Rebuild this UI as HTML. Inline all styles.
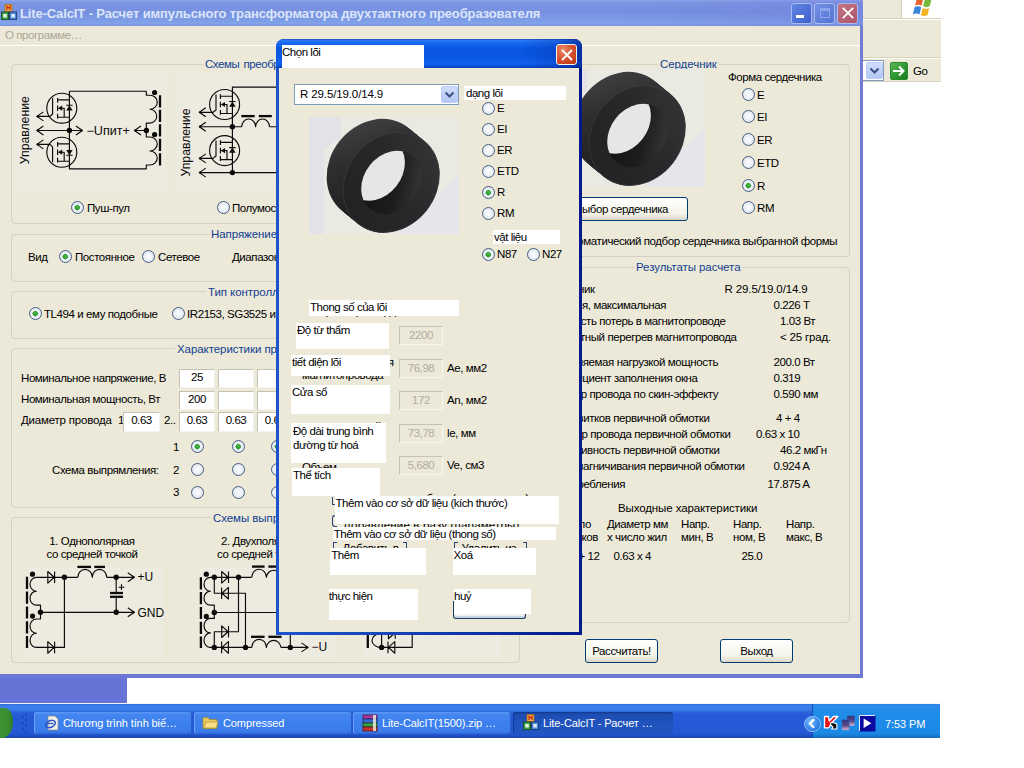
<!DOCTYPE html>
<html lang="ru"><head><meta charset="utf-8"><title>Lite-CalcIT</title>
<style>
html,body{margin:0;padding:0;}
body{width:1024px;height:768px;position:relative;overflow:hidden;background:#fff;font-family:"Liberation Sans",sans-serif;font-size:11.5px;color:#000;line-height:13px;letter-spacing:-0.42px;}
div,span{position:absolute;white-space:nowrap;box-sizing:border-box;}
svg{position:absolute;overflow:visible;}
.t{height:13px;line-height:13px;}
.beige{background:#ece9d8;}
.grp{border:1px solid #d4d1c0;border-radius:4px;}
.cap{color:#123e92;letter-spacing:-0.07px;background:#ece9d8;padding:0 2px;}
.rad{width:13px;height:13px;border-radius:50%;border:1.25px solid #465c7e;background:radial-gradient(circle at 50% 50%,#fafbfd 0,#eef2f8 45%,#d4deec 100%);}
.rad.on::after{content:"";position:absolute;left:3px;top:3px;width:4.6px;height:4.6px;border-radius:40%;transform:rotate(45deg);background:radial-gradient(circle at 45% 40%,#4fc04f 0,#2a9c2a 55%,#1c7c1c 100%);}
.inp{background:#fff;border:1px solid #c4c2b4;border-right-color:#f4f3ee;border-bottom-color:#f4f3ee;text-align:center;line-height:15px;}
.btn{border:1px solid #003c74;border-radius:3px;background:linear-gradient(#fff 0,#f5f4ea 70%,#dcd8c8 100%);text-align:center;}
.wl{background:#fff;}
.tb{top:711.5px;width:158px;height:22.5px;border-radius:3px;background:linear-gradient(#5c98f6 0,#4486f0 12%,#3c80ee 50%,#3a7cea 88%,#2e68d6 100%);box-shadow:inset 1px 0 0 #6aa0f8, inset -1px 0 0 #2a5cc8;}
.tb.act{width:160px;background:linear-gradient(#1a44a4 0,#1e4eb4 15%,#2054be 60%,#2054be 100%);box-shadow:inset 1px 1px 1px #123a94;}
.tbt{color:#fff;font-size:11px;letter-spacing:-0.1px;}
.cb{top:3px;width:21px;height:21px;border-radius:3px;border:1px solid #a8bcf0;}
.vl{padding-top:1px;line-height:13px;letter-spacing:-0.47px;white-space:nowrap;overflow:hidden;}
.din{width:44px;height:19px;border:1px solid #c5c2b0;border-right-color:#f6f5f0;border-bottom-color:#f6f5f0;text-align:center;line-height:16px;color:#b0ad9c;background:#ece9d8;}
.btn.dflt{border-color:#1c3c5c;box-shadow:inset 0 -2px 1px #c4d4e6, inset 1px 0 0 #d4e0ee, inset -1px 0 0 #d4e0ee;background:#f6f6f2;}
.brk{height:10px;border-left:1px solid #2a4478;border-right:1px solid #2a4478;}
.brk::before,.brk::after{content:"";position:absolute;top:0;width:3px;height:1px;background:#2a4478;}
.brk::before{left:0;}.brk::after{right:0;}

</style></head>
<body>
<!-- background: remnants of a browser window -->
<div class="beige" style="left:863px;top:0;width:78px;height:82px;"></div>
<div style="left:901px;top:0;width:40px;height:18px;background:#fff;border-left:1px solid #d8d2bd;"></div>
<div style="left:863px;top:18px;width:78px;height:1px;background:#d8d2bd;"></div>
<div style="left:863px;top:19px;width:78px;height:1px;background:#fff;"></div>
<div style="left:863px;top:57px;width:78px;height:1px;background:#d8d2bd;"></div>
<div style="left:863px;top:58px;width:78px;height:1px;background:#fbfaf6;"></div>
<div style="left:863px;top:81px;width:78px;height:1px;background:#d8d2bd;"></div>
<!-- windows flag -->
<svg style="left:911.5px;top:-3.5px" width="24" height="20.7" viewBox="0 0 22 19">
 <path d="M4.6 1 Q7.6 -0.4 10.4 1.2 L8.8 8 Q6 6.4 2.8 7.8 Z" fill="#e6622c"/>
 <path d="M11.8 1.8 Q14.8 3.4 18 1.8 L16.2 8.6 Q13 10 10.2 8.6 Z" fill="#78b83c"/>
 <path d="M2.4 9.2 Q5.6 7.8 8.4 9.4 L6.8 16 Q4 14.4 0.8 15.8 Z" fill="#3a84d8"/>
 <path d="M9.8 10 Q12.8 11.6 15.8 10 L14.2 16.8 Q11 18.2 8.2 16.8 Z" fill="#f0b428"/>
</svg>
<!-- address bar dropdown + Go -->
<div style="left:863px;top:60px;width:21px;height:21px;background:#fff;border-top:1px solid #7f9db9;border-bottom:1px solid #7f9db9;border-right:1px solid #7f9db9;"></div>
<div style="left:866px;top:62px;width:17px;height:17px;background:linear-gradient(#cfdcfb,#b5c8f5);border:1px solid #b9cdf8;border-radius:2px;"></div>
<svg style="left:869px;top:67px" width="11" height="8" viewBox="0 0 11 8"><path d="M1.5 1.5 L5.5 5.5 L9.5 1.5" fill="none" stroke="#3c4f84" stroke-width="2"/></svg>
<div style="left:890px;top:62px;width:18px;height:18px;border-radius:2px;background:linear-gradient(135deg,#5cb85a 0,#2f9a32 50%,#1d7a22 100%);border:1px solid #2a8a2e;"></div>
<svg style="left:892px;top:65px" width="14" height="12" viewBox="0 0 14 12"><path d="M1 6 H11 M7 1.5 L11.5 6 L7 10.5" fill="none" stroke="#fff" stroke-width="2"/></svg>
<div class="t" style="left:913px;top:65px;">Go</div>

<!-- strip below main window -->
<div style="left:0;top:678px;width:127px;height:25px;background:#6674d8;"></div>
<div style="left:0;top:702.5px;width:940px;height:2px;background:#f4f6fc;"></div>

<!-- taskbar -->
<div style="left:0;top:704.3px;width:940px;height:33.5px;background:linear-gradient(#2f6cda 0,#3c82ea 6%,#3a7ee8 17%,#2c66dc 23%,#255ad8 30%,#2458d5 85%,#214fc6 93%,#1b42aa 100%);"></div>
<div style="left:0;top:708px;width:12.5px;height:30px;border-radius:0 9px 11px 0/0 12px 16px 0;background:linear-gradient(90deg,#3f9436 0,#3a8e30 60%,#2c7a22 100%);"></div>
<!-- grip -->
<svg style="left:22px;top:711px" width="8" height="24" viewBox="0 0 8 24">
 <g fill="#1a48b8"><rect x="3" y="2" width="2" height="2"/><rect x="0" y="5" width="2" height="2"/><rect x="3" y="8" width="2" height="2"/><rect x="0" y="11" width="2" height="2"/><rect x="3" y="14" width="2" height="2"/><rect x="0" y="17" width="2" height="2"/><rect x="3" y="20" width="2" height="2"/></g>
</svg>
<!-- task buttons -->
<div class="tb" style="left:34px;"></div>
<div class="tb" style="left:194px;"></div>
<div class="tb" style="left:353px;"></div>
<div class="tb act" style="left:513px;"></div>
<div class="t tbt" style="left:63px;top:717px;">Chương trình tính biế…</div>
<div class="t tbt" style="left:223px;top:717px;">Compressed</div>
<div class="t tbt" style="left:382px;top:717px;">Lite-CalcIT(1500).zip …</div>
<div class="t tbt" style="left:543px;top:717px;">Lite-CalcIT - Расчет …</div>
<!-- task icons -->
<svg style="left:44px;top:715px" width="16" height="16" viewBox="0 0 16 16">
 <path d="M4 1 H11 L14 4 V15 H4 Z" fill="#f4f2ea" stroke="#8a8a92" stroke-width="0.8"/>
 <ellipse cx="6.5" cy="9" rx="5" ry="3.2" fill="none" stroke="#2a56c8" stroke-width="1.6" transform="rotate(-25 6.5 9)"/>
 <path d="M3.5 8.5 H9.5" stroke="#2a56c8" stroke-width="1.4"/>
</svg>
<svg style="left:202px;top:715px" width="17" height="16" viewBox="0 0 17 16">
 <path d="M1 3.5 Q1 2.5 2 2.5 H6 L7.5 4.5 H14 Q15 4.5 15 5.5 V12.5 Q15 13.5 14 13.5 H2 Q1 13.5 1 12.5 Z" fill="#e8c860" stroke="#a88a28" stroke-width="0.8"/>
 <path d="M2 13 L4 7 H16 L14 13 Z" fill="#f8e088" stroke="#b89a30" stroke-width="0.8"/>
</svg>
<svg style="left:362px;top:714px" width="17" height="18" viewBox="0 0 17 18">
 <rect x="1" y="1" width="14" height="4" fill="#a83a9a" stroke="#4a1a48" stroke-width="0.8"/>
 <rect x="1" y="5" width="14" height="4" fill="#3a6ad0" stroke="#1a2a68" stroke-width="0.8"/>
 <rect x="1" y="9" width="14" height="4" fill="#38a048" stroke="#18481e" stroke-width="0.8"/>
 <rect x="1" y="13" width="14" height="4" fill="#c83030" stroke="#581414" stroke-width="0.8"/>
 <rect x="11" y="1" width="3" height="16" fill="#f0e8d8" opacity="0.85"/>
</svg>
<svg style="left:523px;top:714px" width="16" height="16" viewBox="0 0 16 16">
 <rect x="4" y="0.5" width="7" height="7" fill="#f0a848" stroke="#b06a18" stroke-width="0.8"/>
 <path d="M6 6 V2.2 L7.5 4 L9 2.2 V6" fill="none" stroke="#c02818" stroke-width="1.1"/>
 <rect x="0.5" y="8" width="7" height="7.5" fill="#3aa048" stroke="#1a4a28" stroke-width="0.9"/>
 <rect x="8.5" y="8" width="7" height="7.5" fill="#4a8ad8" stroke="#1a3a78" stroke-width="0.9"/>
 <rect x="2.3" y="10" width="3.5" height="3.5" fill="#e8f4e0"/><rect x="10.3" y="10" width="3.5" height="3.5" fill="#e0ecf8"/>
</svg>
<!-- tray -->
<div style="left:812px;top:704.3px;width:128px;height:33.5px;background:linear-gradient(#2a80e0 0,#2e8cec 6%,#2a8aea 13%,#1e8ce8 20%,#1b8ae6 85%,#1a7cd4 93%,#1666b8 100%);border-left:1px solid #1450b0;"></div>
<div style="left:804px;top:715.5px;width:16.5px;height:16.5px;border-radius:50%;background:radial-gradient(circle at 38% 32%,#7cc0ff 0,#3a8cec 50%,#1c60cc 100%);border:1px solid #8cbcf4;"></div>
<svg style="left:807px;top:718px" width="10" height="11" viewBox="0 0 10 11"><path d="M7 1.2 L3 5.5 L7 9.8" fill="none" stroke="#fff" stroke-width="2.3"/></svg>
<svg style="left:822.5px;top:714.5px" width="16" height="16" viewBox="0 0 16 16">
 <path d="M1.5 1.5 H5.5 L6.2 6 L10.5 1.5 H14.8 L8.6 8 L6 12.8 H1.5 Z" fill="#e81414" stroke="#fff" stroke-width="1.3" stroke-linejoin="round"/>
 <path d="M8.2 7.2 L13.8 8.8 L13.8 14 L8.6 14 L10 12.2 L7.4 9.4 Z" fill="#0c0c0c" stroke="#fff" stroke-width="1.1" stroke-linejoin="round"/>
</svg>
<svg style="left:840.5px;top:714.5px" width="15" height="17" viewBox="0 0 15 17">
 <defs><linearGradient id="nw" x1="0" y1="0" x2="0" y2="1"><stop offset="0" stop-color="#34347a"/><stop offset="0.55" stop-color="#5a4a8a"/><stop offset="1" stop-color="#e8b8cc"/></linearGradient></defs>
 <rect x="6" y="0.8" width="7.6" height="10" rx="1" fill="url(#nw)"/>
 <rect x="0.8" y="4.6" width="7.6" height="10.6" rx="1" fill="url(#nw)" stroke="#2a80e0" stroke-width="0.5"/>
</svg>
<svg style="left:858.5px;top:714.5px" width="17" height="17" viewBox="0 0 17 17">
 <rect x="0" y="0" width="16.5" height="16.5" fill="#0a0aa0"/>
 <path d="M0.5 16 V0.5 H16" fill="none" stroke="#e8ecff" stroke-width="1"/>
 <path d="M4.6 3.6 L12.4 8.3 L4.6 13 Z" fill="#fff"/>
</svg>
<div class="t tbt" style="left:885px;top:717.5px;">7:53 PM</div>
<!-- main window -->
<div id="mw" class="beige" style="left:0;top:0;width:863px;height:678px;border-right:3px solid #727ad2;border-bottom:4px solid #6c78d6;"></div>
<div style="left:0;top:0;width:863px;height:26px;background:linear-gradient(90deg,rgba(110,110,215,0) 0,rgba(110,110,215,0) 70%,rgba(106,104,212,0.25) 100%),linear-gradient(#8ea8ea 0,#7c96e3 10%,#7790e0 45%,#7c9ae5 72%,#82a4e8 92%,#7690dc 100%);"></div>
<!-- app icon -->
<svg style="left:1px;top:4px" width="16" height="16" viewBox="0 0 16 16">
 <rect x="4" y="0.5" width="7" height="7" fill="#f0a848" stroke="#b06a18" stroke-width="0.8"/>
 <path d="M6 6 V2.2 L7.5 4 L9 2.2 V6" fill="none" stroke="#c02818" stroke-width="1.1"/>
 <rect x="0.5" y="8" width="7" height="7.5" fill="#3aa048" stroke="#1a4a28" stroke-width="0.9"/>
 <rect x="8.5" y="8" width="7" height="7.5" fill="#4a8ad8" stroke="#1a3a78" stroke-width="0.9"/>
 <rect x="2.3" y="10" width="3.5" height="3.5" fill="#e8f4e0"/><rect x="10.3" y="10" width="3.5" height="3.5" fill="#e0ecf8"/>
</svg>
<div id="ttl" style="left:20px;top:6px;height:16px;line-height:16px;font-weight:bold;font-size:13px;color:#dbe6fa;letter-spacing:-0.12px;">Lite-CalcIT - Расчет импульсного трансформатора двухтактного преобразователя</div>
<!-- caption buttons -->
<div class="cb" style="left:791px;background:linear-gradient(135deg,#6486e4,#3c5ecc);"></div>
<div style="left:796px;top:15px;width:7.5px;height:3px;background:#fff;"></div>
<div class="cb" style="left:814px;background:linear-gradient(135deg,#7290e4,#5674d2);"></div>
<div style="left:820px;top:8px;width:10px;height:10px;border:1px solid #8ea4e8;border-top-width:3px;"></div>
<div class="cb" style="left:837px;background:linear-gradient(135deg,#c47484,#ac5468);"></div>
<svg style="left:842px;top:7px" width="12" height="12" viewBox="0 0 12 12"><path d="M0.8 0.8 L11.2 11.2 M11.2 0.8 L0.8 11.2" stroke="#fff" stroke-width="1.8"/></svg>
<!-- menu -->
<div class="t" style="left:5px;top:29px;color:#aaa796;">О программе…</div>
<div style="left:0;top:45px;width:860px;height:1px;background:#fff;"></div>

<!-- group 1 -->
<div class="grp" style="left:10.5px;top:64px;width:509.5px;height:160px;"></div>
<div class="t cap" style="left:203px;top:58px;word-spacing:-0.6px;letter-spacing:-0.45px;">Схемы&nbsp; преобразователя</div>
<div style="left:16px;top:72px;width:150px;height:118px;background:#edebe0;"></div>
<div style="left:176px;top:72px;width:150px;height:118px;background:#edebe0;"></div>
<div class="rad on" style="left:71px;top:201px;"></div><div class="t" style="left:87px;top:202px;">Пуш-пул</div>
<div class="rad" style="left:217px;top:201px;"></div><div class="t" style="left:232px;top:202px;">Полумост</div>

<!-- group 2 -->
<div class="grp" style="left:10.5px;top:234px;width:509.5px;height:48px;"></div>
<div class="t cap" style="left:209px;top:228px;">Напряжение питания</div>
<div class="t" style="left:28px;top:251px;">Вид</div>
<div class="rad on" style="left:59px;top:250px;"></div><div class="t" style="left:75px;top:251px;">Постоянное</div>
<div class="rad" style="left:142px;top:250px;"></div><div class="t" style="left:158px;top:251px;">Сетевое</div>
<div class="t" style="left:232px;top:251px;">Диапазон</div>

<!-- group 3 -->
<div class="grp" style="left:10.5px;top:291px;width:509.5px;height:48px;"></div>
<div class="t cap" style="left:206px;top:286px;">Тип контроллера</div>
<div class="rad on" style="left:29px;top:307px;"></div><div class="t" style="left:44px;top:308px;">TL494 и ему подобные</div>
<div class="rad" style="left:172px;top:307px;"></div><div class="t" style="left:187px;top:308px;">IR2153, SG3525 и им подобные</div>

<!-- group 4 -->
<div class="grp" style="left:10.5px;top:348px;width:509.5px;height:160px;"></div>
<div class="t cap" style="left:175px;top:343px;">Характеристики преобразователя</div>
<div class="t" style="left:21px;top:372px;">Номинальное напряжение, В</div>
<div class="t" style="left:21px;top:393px;">Номинальная мощность, Вт</div>
<div class="t" style="left:21px;top:414px;letter-spacing:-0.2px;">Диаметр провода</div><div class="t" style="left:118px;top:414px;">1</div><div class="t" style="left:164px;top:414px;">2..</div>
<div class="inp" style="left:179px;top:369px;width:36px;height:19px;">25</div><div class="inp" style="left:218px;top:369px;width:36px;height:19px;"></div><div class="inp" style="left:257px;top:369px;width:36px;height:19px;"></div>
<div class="inp" style="left:179px;top:391px;width:36px;height:19px;">200</div><div class="inp" style="left:218px;top:391px;width:36px;height:19px;"></div><div class="inp" style="left:257px;top:391px;width:36px;height:19px;"></div>
<div class="inp" style="left:123px;top:412px;width:37px;height:20px;">0.63</div><div class="inp" style="left:179px;top:412px;width:36px;height:20px;">0.63</div><div class="inp" style="left:218px;top:412px;width:36px;height:20px;">0.63</div><div class="inp" style="left:257px;top:412px;width:36px;height:20px;">0.63</div>
<div class="t" style="left:173px;top:441px;">1</div><div class="t" style="left:173px;top:464px;">2</div><div class="t" style="left:173px;top:486px;">3</div>
<div class="t" style="left:52px;top:464px;">Схема выпрямления:</div>
<div class="rad on" style="left:191px;top:440px;"></div><div class="rad on" style="left:232px;top:440px;"></div><div class="rad on" style="left:271px;top:440px;"></div>
<div class="rad" style="left:191px;top:463px;"></div><div class="rad" style="left:232px;top:463px;"></div><div class="rad" style="left:271px;top:463px;"></div>
<div class="rad" style="left:191px;top:486px;"></div><div class="rad" style="left:232px;top:486px;"></div><div class="rad" style="left:271px;top:486px;"></div>

<!-- group 5 -->
<div class="grp" style="left:10.5px;top:517px;width:509.5px;height:146px;"></div>
<div class="t cap" style="left:211px;top:512px;">Схемы выпрямления</div>
<div class="t" style="left:42px;top:535px;width:100px;text-align:center;">1. Однополярная</div>
<div class="t" style="left:42px;top:548px;width:100px;text-align:center;">со средней точкой</div>
<div class="t" style="left:221px;top:535px;">2. Двухполярная</div>
<div class="t" style="left:217px;top:548px;">со средней точкой</div>
<div style="left:25px;top:566px;width:138px;height:91px;background:#edebe0;"></div>
<div style="left:199px;top:566px;width:138px;height:91px;background:#edebe0;"></div>
<div style="left:363px;top:566px;width:138px;height:91px;background:#edebe0;"></div>

<!-- right: core group -->
<div class="grp" style="left:529px;top:64px;width:321px;height:193px;"></div>
<div class="t cap" style="left:658px;top:58px;">Сердечник</div>
<div style="left:555px;top:69px;width:149px;height:118px;background:#e6e6e6;"></div>
<div class="t" style="left:728px;top:71px;">Форма сердечника</div>
<div class="rad" style="left:742px;top:88px;"></div><div class="t" style="left:757px;top:89px;">E</div>
<div class="rad" style="left:742px;top:110px;"></div><div class="t" style="left:757px;top:111px;">EI</div>
<div class="rad" style="left:742px;top:133px;"></div><div class="t" style="left:757px;top:134px;">ER</div>
<div class="rad" style="left:742px;top:156px;"></div><div class="t" style="left:757px;top:157px;">ETD</div>
<div class="rad on" style="left:742px;top:179px;"></div><div class="t" style="left:757px;top:180px;">R</div>
<div class="rad" style="left:742px;top:201px;"></div><div class="t" style="left:757px;top:202px;">RM</div>
<div class="btn" style="left:560px;top:197px;width:128px;height:24px;line-height:22px;text-align:right;padding-right:19px;">Выбор сердечника</div>
<div class="t" style="right:187px;top:235px;">Автоматический подбор сердечника выбранной формы</div>

<!-- right: results group -->
<div class="grp" style="left:529px;top:267px;width:321px;height:356px;"></div>
<div class="t cap" style="left:634px;top:261px;">Результаты расчета</div>
<div class="t" style="right:429.5px;top:283px;">Сердечник</div><div class="t" style="left:724.5px;top:283px;letter-spacing:-0.12px;">R 29.5/19.0/14.9</div>
<div class="t" style="right:358px;top:299px;">Индукция, максимальная</div><div class="t" style="left:773.5px;top:299px;">0.226 Т</div>
<div class="t" style="right:298.5px;top:315px;">Мощность потерь в магнитопроводе</div><div class="t" style="left:780px;top:315px;">1.03 Вт</div>
<div class="t" style="right:287.5px;top:331px;">Расчетный перегрев магнитопровода</div><div class="t" style="left:780px;top:331px;letter-spacing:-0.17px;">&lt; 25 град.</div>
<div class="t" style="right:306px;top:356px;">Потребляемая нагрузкой мощность</div><div class="t" style="left:773.5px;top:356px;">200.0 Вт</div>
<div class="t" style="right:326.5px;top:372px;">Коэффициент заполнения окна</div><div class="t" style="left:773.5px;top:372px;">0.319</div>
<div class="t" style="right:306px;top:388px;">Диаметр провода по скин-эффекту</div><div class="t" style="left:773.5px;top:388px;">0.590 мм</div>
<div class="t" style="right:314.5px;top:412px;">Число витков первичной обмотки</div><div class="t" style="left:776px;top:412px;">4 + 4</div>
<div class="t" style="right:293.5px;top:428px;">Диаметр провода первичной обмотки</div><div class="t" style="left:756px;top:428px;">0.63 x 10</div>
<div class="t" style="right:304.5px;top:444px;">Индуктивность первичной обмотки</div><div class="t" style="left:780px;top:444px;">46.2 мкГн</div>
<div class="t" style="right:279.5px;top:460px;">Ток намагничивания первичной обмотки</div><div class="t" style="left:773.5px;top:460px;">0.924 A</div>
<div class="t" style="right:399px;top:478px;">Ток потребления</div><div class="t" style="left:767.5px;top:478px;">17.875 A</div>
<div class="t" style="left:618px;top:502px;letter-spacing:-0.11px;">Выходные характеристики</div>
<div class="t" style="right:433px;top:518px;">Число</div>
<div class="t" style="right:426px;top:531px;">витков</div>
<div class="t" style="left:607px;top:518px;">Диаметр мм</div>
<div class="t" style="left:607px;top:531px;">x число жил</div>
<div class="t" style="left:681px;top:518px;">Напр.</div>
<div class="t" style="left:681px;top:531px;">мин, В</div>
<div class="t" style="left:733px;top:518px;">Напр.</div>
<div class="t" style="left:733px;top:531px;">ном, В</div>
<div class="t" style="left:786px;top:518px;">Напр.</div>
<div class="t" style="left:786px;top:531px;">макс, В</div>
<div class="t" style="right:424.5px;top:550px;">12 + 12</div>
<div class="t" style="left:613.5px;top:550px;">0.63 x 4</div>
<div class="t" style="left:741.5px;top:550px;">25.0</div>
<div class="btn" style="left:585px;top:639px;width:73px;height:24px;line-height:22px;">Рассчитать!</div>
<div class="btn" style="left:720px;top:639px;width:73px;height:24px;line-height:22px;">Выход</div>
<svg style="left:555px;top:69.5px" width="150" height="117" viewBox="0 0 150 117">
<defs>
<linearGradient id="r2s" x1="0.75" y1="0" x2="0.1" y2="0.9"><stop offset="0" stop-color="#414143"/><stop offset="0.35" stop-color="#2e2e30"/><stop offset="1" stop-color="#1b1b1d"/></linearGradient>
<linearGradient id="r2f" x1="0" y1="0.3" x2="1" y2="0.7"><stop offset="0" stop-color="#222224"/><stop offset="0.6" stop-color="#29292b"/><stop offset="1" stop-color="#343436"/></linearGradient>
<linearGradient id="r2i" x1="0.2" y1="0.1" x2="0.8" y2="1"><stop offset="0" stop-color="#141416"/><stop offset="0.55" stop-color="#1d1d1f"/><stop offset="1" stop-color="#38383a"/></linearGradient>
<clipPath id="r2c"><ellipse cx="82.3" cy="65.5" rx="34" ry="27.5" transform="rotate(-52 82.3 65.5)"/></clipPath>
</defs>
<rect width="150" height="117" fill="#eae9e2"/>
<path d="M0 0 H32 V20 L15 32 V117 H0 Z" fill="#e2e2e7"/>
<path d="M88 117 L150 58 V117 Z" fill="#e5e5ea"/>
<g fill="url(#r2s)"><ellipse cx="82.30" cy="65.50" rx="53" ry="45" transform="rotate(-52 82.30 65.50)"/><ellipse cx="80.92" cy="64.38" rx="53" ry="45" transform="rotate(-52 80.92 64.38)"/><ellipse cx="79.55" cy="63.25" rx="53" ry="45" transform="rotate(-52 79.55 63.25)"/><ellipse cx="78.17" cy="62.12" rx="53" ry="45" transform="rotate(-52 78.17 62.12)"/><ellipse cx="76.80" cy="61.00" rx="53" ry="45" transform="rotate(-52 76.80 61.00)"/><ellipse cx="75.42" cy="59.88" rx="53" ry="45" transform="rotate(-52 75.42 59.88)"/><ellipse cx="74.05" cy="58.75" rx="53" ry="45" transform="rotate(-52 74.05 58.75)"/><ellipse cx="72.67" cy="57.62" rx="53" ry="45" transform="rotate(-52 72.67 57.62)"/><ellipse cx="71.30" cy="56.50" rx="53" ry="45" transform="rotate(-52 71.30 56.50)"/><ellipse cx="69.92" cy="55.38" rx="53" ry="45" transform="rotate(-52 69.92 55.38)"/><ellipse cx="68.55" cy="54.25" rx="53" ry="45" transform="rotate(-52 68.55 54.25)"/><ellipse cx="67.17" cy="53.12" rx="53" ry="45" transform="rotate(-52 67.17 53.12)"/><ellipse cx="65.80" cy="52.00" rx="53" ry="45" transform="rotate(-52 65.80 52.00)"/></g>
<ellipse cx="82.3" cy="65.5" rx="53" ry="45" transform="rotate(-52 82.3 65.5)" fill="url(#r2f)" stroke="#48484a" stroke-width="0.7" stroke-opacity="0.6"/>
<ellipse cx="82.3" cy="65.5" rx="34" ry="27.5" transform="rotate(-52 82.3 65.5)" fill="url(#r2i)"/>
<g clip-path="url(#r2c)"><ellipse cx="65.8" cy="52.0" rx="34" ry="27.5" transform="rotate(-52 65.8 52.0)" fill="#e6e6e8"/></g>
</svg>
<svg style="left:0;top:0" width="1024" height="768" viewBox="0 0 1024 768" font-family="Liberation Sans, sans-serif" letter-spacing="0">
<path fill="none" stroke="#0a0a0a" stroke-width="1.15" stroke-linejoin="round" d="M69.4 91.2 L146.3 91.2 L146.3 95.2 L150.0 95.2 M150.0 95.2 A7.25 6.97 0 0 1 150.0 109.2 A7.25 6.97 0 0 1 150.0 123.1 M150.0 123.1 L146.3 123.1 L146.3 137.0 L150.0 137.0 M150.0 137.0 A7.25 7.00 0 0 1 150.0 151.0 A7.25 7.00 0 0 1 150.0 165.0 M150.0 165.0 L146.3 165.0 L146.3 168.8 L69.4 168.8 L69.4 91.2 M36.9 130.5 L82.4 130.5 M43.4 126.0 L36.9 130.5 L43.4 135.0 M75.9 126.0 L82.4 130.5 L75.9 135.0 M43.4 111.9 L36.9 116.4 L43.4 120.9 M36.9 116.4 L50.0 116.4 L52.6 114.0 L52.6 98.0 M43.4 139.9 L36.9 144.4 L43.4 148.9 M36.9 144.4 L50.0 144.4 L52.6 146.8 L52.6 162.3 M46.8 108.2 a15 15 0 1 0 30 0 a15 15 0 1 0 -30 0 M57.6 97.9 L57.6 102.7 M57.6 105.4 L57.6 111.0 M57.6 113.7 L57.6 118.5 M57.6 99.9 L69.4 99.9 M57.6 117.2 L69.4 117.2 M58.6 108.2 L64.2 108.2 L64.2 117.2 M66.2 105.2 L72.6 105.2 M46.8 152.2 a15 15 0 1 0 30 0 a15 15 0 1 0 -30 0 M57.6 141.9 L57.6 146.7 M57.6 149.4 L57.6 155.0 M57.6 157.7 L57.6 162.5 M57.6 143.9 L69.4 143.9 M57.6 161.2 L69.4 161.2 M58.6 152.2 L64.2 152.2 L64.2 161.2 M66.2 155.2 L72.6 155.2 M141.0 126.0 L134.5 130.5 L141.0 135.0 M134.5 130.5 L146.4 130.5 M300.0 87.1 L232.4 87.1 L232.4 172.6 M199.3 126.7 L241.7 126.7 M241.7 126.7 A6.95 7.65 0 0 1 255.6 126.7 A6.95 7.65 0 0 1 269.5 126.7 M269.5 126.7 L300.0 126.7 M199.3 172.6 L300.0 172.6 M205.8 107.8 L199.3 112.3 L205.8 116.8 M205.8 122.2 L199.3 126.7 L205.8 131.2 M205.8 153.9 L199.3 158.4 L205.8 162.9 M205.8 168.1 L199.3 172.6 L205.8 177.1 M199.3 112.3 L213.0 112.3 L216.0 110.0 L216.0 94.4 M199.3 158.4 L213.0 158.4 L216.0 156.0 L216.0 140.5 M209.6 104.5 a15 15 0 1 0 30 0 a15 15 0 1 0 -30 0 M220.4 94.2 L220.4 99.0 M220.4 101.7 L220.4 107.3 M220.4 110.0 L220.4 114.8 M220.4 96.2 L232.4 96.2 M220.4 113.5 L232.4 113.5 M221.4 104.5 L227.0 104.5 L227.0 113.5 M229.2 101.5 L235.6 101.5 M209.6 150.6 a15 15 0 1 0 30 0 a15 15 0 1 0 -30 0 M220.4 140.3 L220.4 145.1 M220.4 147.8 L220.4 153.4 M220.4 156.1 L220.4 160.9 M220.4 142.3 L232.4 142.3 M220.4 159.6 L232.4 159.6 M221.4 150.6 L227.0 150.6 L227.0 159.6 M229.2 147.6 L235.6 147.6 M36.4 577.3 L64.4 577.3 L77.9 577.3 M77.9 577.3 A7.20 7.92 0 0 1 92.3 577.3 A7.20 7.92 0 0 1 106.7 577.3 M106.7 577.3 L134.3 577.3 M36.4 577.3 A6.40 6.95 0 0 0 36.4 591.2 A6.40 6.95 0 0 0 36.4 605.1 M36.4 605.1 L40.5 605.1 L40.5 619.0 L36.4 619.0 M36.4 619.0 A6.40 7.10 0 0 0 36.4 633.2 A6.40 7.10 0 0 0 36.4 647.4 M36.4 647.4 L64.4 647.4 L64.4 577.3 M40.5 612.3 L134.3 612.3 M47.8 571.5 L54.2 577.3 L47.8 583.1 Z M54.6 571.5 L54.6 583.1 M47.8 641.6 L54.2 647.4 L47.8 653.2 Z M54.6 641.6 L54.6 653.2 M127.8 572.8 L134.3 577.3 L127.8 581.8 M127.8 607.8 L134.3 612.3 L127.8 616.8 M116.2 577.3 L116.2 593.0 M116.2 596.8 L116.2 612.3 M118.6 587.2 L124.4 587.2 M121.5 584.3 L121.5 590.1 M210.4 577.3 L251.8 577.3 M251.8 577.3 A7.30 8.03 0 0 1 266.4 577.3 A7.30 8.03 0 0 1 280.9 577.3 M281.0 577.3 L300.0 577.3 M210.4 577.3 A6.40 6.95 0 0 0 210.4 591.2 A6.40 6.95 0 0 0 210.4 605.1 M210.4 605.1 L214.3 605.1 L214.3 618.4 L210.4 618.4 M210.4 618.4 A6.40 7.25 0 0 0 210.4 632.9 A6.40 7.25 0 0 0 210.4 647.4 M210.4 647.4 L251.8 647.4 M251.8 647.4 A7.30 8.03 0 0 1 266.4 647.4 A7.30 8.03 0 0 1 280.9 647.4 M281.0 647.4 L308.0 647.4 M214.3 612.5 L300.0 612.5 M214.3 577.3 L214.3 593.2 L245.5 593.2 L245.5 647.4 M238.5 577.3 L238.5 631.7 L214.3 631.7 L214.3 647.4 M221.7 571.5 L228.1 577.3 L221.7 583.1 Z M228.5 571.5 L228.5 583.1 M228.4 587.4 L222.0 593.2 L228.4 599.0 Z M221.6 587.4 L221.6 599.0 M221.7 625.9 L228.1 631.7 L221.7 637.5 Z M228.5 625.9 L228.5 637.5 M228.4 641.6 L222.0 647.4 L228.4 653.2 Z M221.6 641.6 L221.6 653.2 M290.3 647.4 L290.3 620.0 M301.5 642.9 L308.0 647.4 L301.5 651.9 M381.0 619.4 A9.00 7.00 0 0 0 381.0 633.4 A9.00 7.00 0 0 0 381.0 647.4 M381.0 647.4 L412.2 647.4 L412.2 600.0 M381.6 647.4 L381.6 633.0 L412.2 633.0 M394.8 641.6 L388.4 647.4 L394.8 653.2 Z M388.0 641.6 L388.0 653.2 M388.4 627.2 L394.8 633.0 L388.4 638.8 Z M395.2 627.2 L395.2 638.8"/>
<path fill="none" stroke="#0a0a0a" stroke-width="2.3" stroke-dasharray="12.2 2.3" d="M160.0 95.2 L160.0 165.6"/>
<path fill="none" stroke="#0a0a0a" stroke-width="2.3" d="M241.3 116.1 L254.7 116.1"/>
<path fill="none" stroke="#0a0a0a" stroke-width="2.3" d="M258.8 116.1 L271.8 116.1"/>
<path fill="none" stroke="#0a0a0a" stroke-width="2.3" stroke-dasharray="12.2 2.6" d="M27.0 576.8 L27.0 648.0"/>
<path fill="none" stroke="#0a0a0a" stroke-width="2.3" d="M110.0 593.0 L123.0 593.0"/>
<path fill="none" stroke="#0a0a0a" stroke-width="2.3" d="M110.0 596.8 L123.0 596.8"/>
<path fill="none" stroke="#0a0a0a" stroke-width="2.3" d="M77.4 566.9 L91.0 566.9"/>
<path fill="none" stroke="#0a0a0a" stroke-width="2.3" d="M94.3 566.9 L105.0 566.9"/>
<path fill="none" stroke="#0a0a0a" stroke-width="2.3" stroke-dasharray="12.2 2.6" d="M200.9 577.3 L200.9 648.0"/>
<path fill="none" stroke="#0a0a0a" stroke-width="2.3" d="M252.0 566.6 L264.6 566.6"/>
<path fill="none" stroke="#0a0a0a" stroke-width="2.3" d="M268.4 566.6 L281.6 566.6"/>
<path fill="none" stroke="#0a0a0a" stroke-width="2.3" d="M251.0 636.8 L264.6 636.8"/>
<path fill="none" stroke="#0a0a0a" stroke-width="2.3" d="M268.4 636.8 L281.6 636.8"/>
<path fill="none" stroke="#0a0a0a" stroke-width="2.3" d="M367.8 600.0 L367.8 648.0"/>
<g fill="#0a0a0a"><circle cx="37.7" cy="130.5" r="1.1"/><circle cx="81.6" cy="130.5" r="1.1"/><circle cx="69.4" cy="130.5" r="2.7"/><circle cx="37.7" cy="116.4" r="1.1"/><circle cx="37.7" cy="144.4" r="1.1"/><path d="M58.2 108.2 l4 -2.6 v5.2 z"/><path d="M69.4 105.2 l3.2 5.2 h-6.4 z"/><path d="M58.2 152.2 l4 -2.6 v5.2 z"/><path d="M69.4 155.2 l3.2 -5.2 h-6.4 z"/><circle cx="135.3" cy="130.5" r="1.1"/><circle cx="146.4" cy="130.5" r="2.7"/><circle cx="154.6" cy="92.5" r="2.6"/><circle cx="154.6" cy="134.5" r="2.6"/><circle cx="232.4" cy="126.7" r="2.7"/><circle cx="232.4" cy="172.6" r="2.7"/><circle cx="200.1" cy="112.3" r="1.1"/><circle cx="200.1" cy="126.7" r="1.1"/><circle cx="200.1" cy="158.4" r="1.1"/><circle cx="200.1" cy="172.6" r="1.1"/><path d="M221.0 104.5 l4 -2.6 v5.2 z"/><path d="M232.4 101.5 l3.2 5.2 h-6.4 z"/><path d="M221.0 150.6 l4 -2.6 v5.2 z"/><path d="M232.4 147.6 l3.2 5.2 h-6.4 z"/><circle cx="32.5" cy="574.2" r="2.6"/><circle cx="32.5" cy="616.1" r="2.6"/><circle cx="40.5" cy="612.3" r="2.7"/><circle cx="64.4" cy="577.3" r="2.7"/><circle cx="116.2" cy="577.3" r="2.7"/><circle cx="116.2" cy="612.3" r="2.7"/><circle cx="133.5" cy="577.3" r="1.1"/><circle cx="133.5" cy="612.3" r="1.1"/><circle cx="206.3" cy="574.2" r="2.6"/><circle cx="206.3" cy="616.4" r="2.6"/><circle cx="214.3" cy="577.3" r="2.7"/><circle cx="238.5" cy="577.3" r="2.7"/><circle cx="214.3" cy="612.5" r="2.7"/><circle cx="214.3" cy="647.4" r="2.7"/><circle cx="245.5" cy="647.4" r="2.7"/><circle cx="290.3" cy="647.4" r="2.7"/><circle cx="307.2" cy="647.4" r="1.1"/><circle cx="381.6" cy="647.4" r="2.7"/></g>
<g fill="#0a0a0a"><text x="86.5" y="134.5" font-size="12" textLength="43.5" lengthAdjust="spacingAndGlyphs">−Uпит+</text><text transform="translate(28.8 130.2) rotate(-90)" text-anchor="middle" font-size="12.5" textLength="68" lengthAdjust="spacingAndGlyphs">Управление</text><text transform="translate(190.4 142.5) rotate(-90)" text-anchor="middle" font-size="12.5" textLength="68" lengthAdjust="spacingAndGlyphs">Управление</text><text x="137.6" y="581" font-size="12">+U</text><text x="137.4" y="617.2" font-size="12">GND</text><text x="311.5" y="651.4" font-size="12">−U</text></g>
</svg>
<!-- dialog -->
<div id="dlg" style="left:276px;top:39px;width:306px;height:596px;border-radius:8px 8px 0 0;background:linear-gradient(90deg,#1c52cc 0,#1646b8 35%,#021a8e 100%);"></div>
<div style="left:579px;top:60px;width:3px;height:575px;background:#021a8e;"></div>
<div style="left:276px;top:60px;width:3.3px;height:572px;background:#1c52cc;"></div>
<div style="left:276px;top:39px;width:306px;height:29px;border-radius:8px 8px 0 0;background:linear-gradient(#1c48b4 0,#2a78f6 5%,#1a6cf2 12%,#0a58e2 30%,#0a56e0 60%,#1262f0 82%,#0a52d8 94%,#0a3cb0 100%);"></div>
<div style="left:520px;top:39px;width:62px;height:29px;border-radius:0 8px 0 0;background:linear-gradient(90deg,rgba(0,20,130,0) 0,rgba(0,20,130,0.18) 55%,rgba(0,16,110,0.55) 100%);"></div>
<div class="beige" style="left:279.3px;top:68px;width:299.7px;height:564px;"></div>
<div class="wl vl" style="left:282px;top:45px;width:142px;height:23px;padding-top:1px;">Chọn lõi</div>
<div style="left:556px;top:44px;width:21px;height:21px;border-radius:3px;border:1px solid #f4f0ec;background:radial-gradient(circle at 30% 25%,#ec8a68 0,#d8502c 50%,#b83414 100%);"></div>
<svg style="left:560.5px;top:49px" width="12" height="12" viewBox="0 0 12 12"><path d="M1 1 L11 11 M11 1 L1 11" stroke="#fff" stroke-width="1.9"/></svg>

<!-- combo -->
<div style="left:294px;top:84px;width:165px;height:21px;background:#fff;border:1px solid #7f9db9;"></div>
<div class="t" style="left:300px;top:88px;letter-spacing:-0.12px;">R 29.5/19.0/14.9</div>
<div style="left:441px;top:86px;width:17px;height:17px;background:linear-gradient(#cfdcfb,#b3c6f4);border:1px solid #b9cdf8;border-radius:2px;"></div>
<svg style="left:444px;top:91px" width="11" height="8" viewBox="0 0 11 8"><path d="M1.5 1.5 L5.5 5.5 L9.5 1.5" fill="none" stroke="#3c4f84" stroke-width="2"/></svg>
<div class="wl vl" style="left:464px;top:86px;width:102px;height:14px;padding-left:2px;">dạng lõi</div>

<!-- image -->
<div style="left:309px;top:117px;width:150px;height:116px;background:#e6e6e6;"></div>

<!-- shape radios -->
<div class="rad" style="left:482px;top:102px;"></div><div class="t" style="left:497px;top:102px;">E</div>
<div class="rad" style="left:482px;top:123px;"></div><div class="t" style="left:497px;top:123px;">EI</div>
<div class="rad" style="left:482px;top:144px;"></div><div class="t" style="left:497px;top:144px;">ER</div>
<div class="rad" style="left:482px;top:165px;"></div><div class="t" style="left:497px;top:165px;">ETD</div>
<div class="rad on" style="left:482px;top:186px;"></div><div class="t" style="left:497px;top:186px;">R</div>
<div class="rad" style="left:482px;top:207px;"></div><div class="t" style="left:497px;top:207px;">RM</div>
<div class="wl vl" style="left:493px;top:230px;width:67px;height:14px;padding-left:1px;">vật liệu</div>
<div class="rad on" style="left:482px;top:248px;"></div><div class="t" style="left:497px;top:248px;">N87</div>
<div class="rad" style="left:527px;top:248px;"></div><div class="t" style="left:542px;top:248px;">N27</div>

<!-- parameters -->
<div class="t" style="left:312px;top:305px;">Параметры сердечника</div>
<div class="wl vl" style="left:309px;top:300px;width:150px;height:16px;padding-left:1px;">Thong số của lõi</div>
<div class="wl vl" style="left:296px;top:323px;width:93px;height:26px;padding-left:1px;">Độ từ thẩm</div>
<div class="t" style="left:302px;top:369px;">магнитопровода</div>
<div class="t" style="right:630.5px;top:356px;">сечения</div>
<div class="wl vl" style="left:291px;top:355px;width:99px;height:21px;padding-left:1px;">tiết diện lõi</div>
<div class="wl vl" style="left:291px;top:385px;width:99px;height:29px;padding-left:1px;">Cửa sổ</div>
<div class="t" style="right:643px;top:420px;">линий</div>
<div class="t" style="left:302px;top:460.5px;">Объем</div>
<div class="wl vl" style="left:291px;top:423px;width:95px;height:40px;padding-left:2px;line-height:14px;">Độ dài trung bình<br>đường từ hoá</div>
<div class="wl vl" style="left:292px;top:468px;width:88px;height:28px;padding-left:1px;">Thể tích</div>
<div class="din" style="left:399px;top:326px;">2200</div>
<div class="din" style="left:399px;top:359px;">76,98</div><div class="t" style="left:447px;top:362px;">Ae, мм2</div>
<div class="din" style="left:399px;top:391px;">172</div><div class="t" style="left:447px;top:394px;">An, мм2</div>
<div class="din" style="left:399px;top:424px;">73,78</div><div class="t" style="left:447px;top:427px;">le, мм</div>
<div class="din" style="left:399px;top:456px;">5,680</div><div class="t" style="left:447px;top:459px;">Ve, см3</div>

<!-- remnants of controls hidden under the white labels -->
<div style="left:415px;top:492.4px;width:130px;height:13px;overflow:hidden;"><div class="t" style="left:-64px;top:0;letter-spacing:-0.17px;">Добавление в базу (типоразмеры)</div></div>
<div style="left:331.5px;top:497px;width:4px;height:7.5px;border-left:1px solid #2a4478;border-bottom:1px solid #2a4478;"></div>
<div style="left:331.5px;top:514.5px;width:5px;height:12.5px;border:1px solid #2a4478;border-right:0;border-radius:3px 0 0 3px;"></div>
<div class="t" style="left:343px;top:518.6px;letter-spacing:0.18px;">Добавление в базу (параметры)</div>
<div class="brk" style="left:332.5px;top:541.5px;width:74px;"></div>
<div class="brk" style="left:453.5px;top:541.5px;width:73px;"></div>
<div class="t" style="left:342.5px;top:541.7px;">Добавить в</div>
<div class="t" style="left:461.5px;top:541.7px;">Удалить из</div>
<div class="btn dflt" style="left:453px;top:600.5px;width:73px;height:18.8px;border-top:0;border-radius:0 0 3px 3px;"></div>
<div class="wl vl" style="left:334.5px;top:496px;width:224.5px;height:28px;padding-left:1px;">Thêm vào cơ sở dữ liệu (kích thước)</div>
<div class="wl vl" style="left:332.7px;top:527px;width:223.6px;height:13.3px;padding-left:1px;">Thêm vào cơ sở dữ liệu (thong số)</div>
<div class="wl vl" style="left:330.3px;top:548px;width:96px;height:27px;padding-left:1px;">Thêm</div>
<div class="wl vl" style="left:452.5px;top:548px;width:83.5px;height:27px;padding-left:1px;">Xoá</div>
<div class="wl vl" style="left:328.8px;top:589px;width:89px;height:31px;padding-left:0;">thực hiện</div>
<div class="wl vl" style="left:454px;top:589px;width:77px;height:25px;padding-left:0;">huỷ</div>
<svg style="left:309px;top:117px" width="150" height="117" viewBox="0 0 150 117">
<defs>
<linearGradient id="r1s" x1="0.75" y1="0" x2="0.1" y2="0.9"><stop offset="0" stop-color="#414143"/><stop offset="0.35" stop-color="#2e2e30"/><stop offset="1" stop-color="#1b1b1d"/></linearGradient>
<linearGradient id="r1f" x1="0" y1="0.3" x2="1" y2="0.7"><stop offset="0" stop-color="#222224"/><stop offset="0.6" stop-color="#29292b"/><stop offset="1" stop-color="#343436"/></linearGradient>
<linearGradient id="r1i" x1="0.2" y1="0.1" x2="0.8" y2="1"><stop offset="0" stop-color="#141416"/><stop offset="0.55" stop-color="#1d1d1f"/><stop offset="1" stop-color="#38383a"/></linearGradient>
<clipPath id="r1c"><ellipse cx="82.3" cy="65.5" rx="34" ry="27.5" transform="rotate(-52 82.3 65.5)"/></clipPath>
</defs>
<rect width="150" height="117" fill="#eae9e2"/>
<path d="M0 0 H32 V20 L15 32 V117 H0 Z" fill="#e2e2e7"/>
<path d="M88 117 L150 58 V117 Z" fill="#e5e5ea"/>
<g fill="url(#r1s)"><ellipse cx="82.30" cy="65.50" rx="53" ry="45" transform="rotate(-52 82.30 65.50)"/><ellipse cx="80.92" cy="64.38" rx="53" ry="45" transform="rotate(-52 80.92 64.38)"/><ellipse cx="79.55" cy="63.25" rx="53" ry="45" transform="rotate(-52 79.55 63.25)"/><ellipse cx="78.17" cy="62.12" rx="53" ry="45" transform="rotate(-52 78.17 62.12)"/><ellipse cx="76.80" cy="61.00" rx="53" ry="45" transform="rotate(-52 76.80 61.00)"/><ellipse cx="75.42" cy="59.88" rx="53" ry="45" transform="rotate(-52 75.42 59.88)"/><ellipse cx="74.05" cy="58.75" rx="53" ry="45" transform="rotate(-52 74.05 58.75)"/><ellipse cx="72.67" cy="57.62" rx="53" ry="45" transform="rotate(-52 72.67 57.62)"/><ellipse cx="71.30" cy="56.50" rx="53" ry="45" transform="rotate(-52 71.30 56.50)"/><ellipse cx="69.92" cy="55.38" rx="53" ry="45" transform="rotate(-52 69.92 55.38)"/><ellipse cx="68.55" cy="54.25" rx="53" ry="45" transform="rotate(-52 68.55 54.25)"/><ellipse cx="67.17" cy="53.12" rx="53" ry="45" transform="rotate(-52 67.17 53.12)"/><ellipse cx="65.80" cy="52.00" rx="53" ry="45" transform="rotate(-52 65.80 52.00)"/></g>
<ellipse cx="82.3" cy="65.5" rx="53" ry="45" transform="rotate(-52 82.3 65.5)" fill="url(#r1f)" stroke="#48484a" stroke-width="0.7" stroke-opacity="0.6"/>
<ellipse cx="82.3" cy="65.5" rx="34" ry="27.5" transform="rotate(-52 82.3 65.5)" fill="url(#r1i)"/>
<g clip-path="url(#r1c)"><ellipse cx="65.8" cy="52.0" rx="34" ry="27.5" transform="rotate(-52 65.8 52.0)" fill="#e6e6e8"/></g>
</svg>

</body></html>
